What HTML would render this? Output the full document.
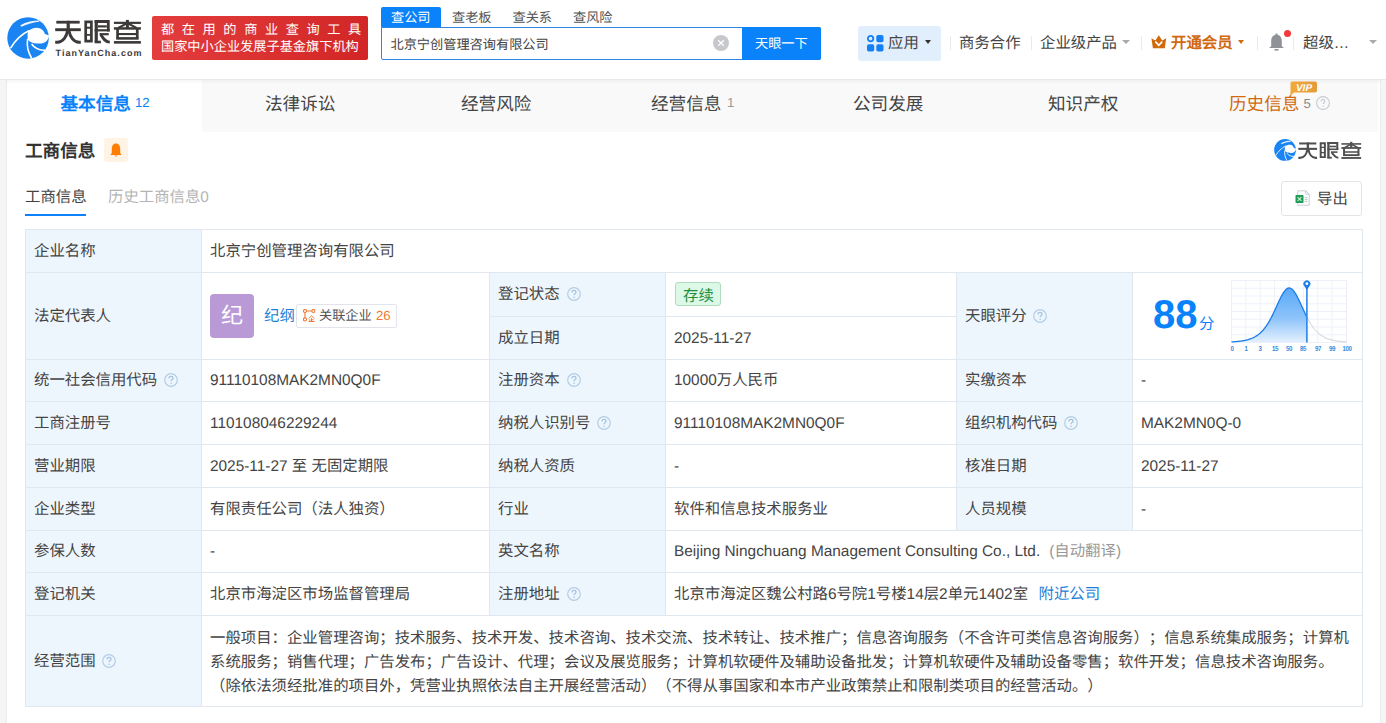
<!DOCTYPE html>
<html lang="zh-CN">
<head>
<meta charset="utf-8">
<style>
*{box-sizing:border-box;margin:0;padding:0}
html,body{width:1386px;height:723px;overflow:hidden}
body{background:#f5f5f5;font-family:"Liberation Sans",sans-serif;color:#333;position:relative;text-spacing-trim:space-all;text-rendering:geometricPrecision}
.a{position:absolute;white-space:nowrap}
.q{position:absolute;width:14px;height:14px}
</style>
</head>
<body>
<div class="a" style="left:0px;top:0px;width:1386px;height:79px;background:#fff"></div>
<div class="a" style="left:0px;top:79px;width:1386px;height:1px;background:#e9e9e9"></div>
<svg class="a" style="left:7px;top:17px" width="42" height="42" viewBox="2 2.5 42 42">
<circle cx="23.05" cy="23.45" r="20.75" fill="#1a85f2"/>
<path d="M23.6 16.2 C27 13.4 31.8 12.6 35.2 13.9 C37.6 14.9 39.3 17 39.9 19.6 L44.5 21.2 L44 22.2 C42.5 26.2 40.2 28.4 36.6 29 C32.2 29.2 28.2 28.9 25.6 27.5 C23.6 26.4 22.7 24.7 22.6 22.2 C22.5 19.8 22.8 17.6 23.6 16.2 Z" fill="#fff"/>
<path d="M15.8 11 C21 8 28 6.2 34.2 6.6 C28 7.5 21.5 9.5 16.5 11.8 Z" fill="#fff" stroke="#fff" stroke-width="0.8"/>
<path d="M5.6 33.6 C10 26 16.5 19.5 24.4 15.9" stroke="#fff" stroke-width="1.6" fill="none"/>
<path d="M22.7 24.2 C21.6 30.5 22.8 37.5 26.8 44" stroke="#fff" stroke-width="1.6" fill="none"/>
<path d="M26.6 29.6 C30 34.2 35 36.2 40.5 35.6" stroke="#fff" stroke-width="1.6" fill="none"/>
</svg>
<svg class="a" style="left:52px;top:16px" width="94" height="30" viewBox="0 0 94 30" preserveAspectRatio="none"><g fill="none" stroke="#3d3939" stroke-linecap="butt" stroke-linejoin="miter">
<path d="M4.3 6.2 H27.7" stroke-width="2.8"/>
<path d="M3.2 13.7 H28.8" stroke-width="2.9"/>
<path d="M16.2 4.8 V14" stroke-width="3.2"/>
<path d="M15.6 14.5 C14.6 20.5 11 26.2 5.5 26.2 H3.2" stroke-width="2.9"/>
<path d="M16.9 14.5 C17.9 20.5 21.5 26.2 27 26.2 H28.8" stroke-width="2.9"/>
<path d="M33.7 5.9 H39.4 V25.2 H33.7 Z" stroke-width="2.7"/>
<path d="M33.7 11.7 H39.4 M33.7 18.9 H39.4" stroke-width="1.9"/>
<path d="M44.25 4.1 V26" stroke-width="3.2"/>
<path d="M42.6 26 H48.9" stroke-width="2.6"/>
<path d="M42.6 5.5 H56.3 M56.3 4.1 V15.4" stroke-width="2.8"/>
<path d="M45.9 10.4 H54.8" stroke-width="2.2"/>
<path d="M42.6 14.3 H57.8" stroke-width="2.2"/>
<path d="M47.6 18.2 H56.7" stroke-width="2.2"/>
<path d="M48.8 18.8 C51.2 22.6 53.4 26.1 57.8 26.1" stroke-width="2.8"/>
<path d="M61.9 6.85 H88.9" stroke-width="2.2"/>
<path d="M75.4 3.9 V12" stroke-width="3"/>
<path d="M74.3 7.6 L66.3 12 M76.5 7.6 L84.5 12" stroke-width="2.2"/>
<path d="M61.9 12.45 H88.9" stroke-width="2.5"/>
<path d="M65.55 12 V22.4 M85.25 12 V22.4" stroke-width="2.7"/>
<path d="M65.55 18.05 H85.25" stroke-width="2.1"/>
<path d="M64.2 22.4 H86.6" stroke-width="2.6"/>
<path d="M61.9 26.35 H88.9" stroke-width="2.6"/>
</g></svg>
<div class="a" style="left:55.5px;top:46.5px;font-size:9.00px;line-height:12.00px;color:#3d3939;font-weight:bold;letter-spacing:1.05px">TianYanCha.com</div>
<div class="a" style="left:152px;top:16px;width:216px;height:44px;background:linear-gradient(100deg,#e43d3d,#d22626);border-radius:2px"></div>
<div class="a" style="left:161px;top:20.5px;font-size:13.20px;line-height:18.00px;color:#fff;letter-spacing:7.6px">都在用的商业查询工具</div>
<div class="a" style="left:161px;top:37.5px;font-size:13.20px;line-height:18.00px;color:#fff;letter-spacing:0px">国家中小企业发展子基金旗下机构</div>
<div class="a" style="left:381px;top:7px;width:60px;height:20px;background:#0a83fa;border-radius:2px 2px 0 0"></div>
<div class="a" style="left:391px;top:7.5px;font-size:13.20px;line-height:20.00px;color:#fff;">查公司</div>
<div class="a" style="left:452px;top:7.5px;font-size:13.20px;line-height:20.00px;color:#555;">查老板</div>
<div class="a" style="left:512.5px;top:7.5px;font-size:13.20px;line-height:20.00px;color:#555;">查关系</div>
<div class="a" style="left:573px;top:7.5px;font-size:13.20px;line-height:20.00px;color:#555;">查风险</div>
<div class="a" style="left:381px;top:27px;width:440px;height:33px;border:1px solid #2f86e0;border-radius:0 2px 2px 2px;background:#fff"></div>
<div class="a" style="left:390.5px;top:35px;font-size:13.20px;line-height:20.00px;color:#444;">北京宁创管理咨询有限公司</div>
<svg class="a" style="left:713px;top:35px" width="16" height="16"><circle cx="8" cy="8" r="8" fill="#c6c8cc"/><path d="M5.2 5.2L10.8 10.8M10.8 5.2L5.2 10.8" stroke="#fff" stroke-width="1.25"/></svg>
<div class="a" style="left:742px;top:27px;width:79px;height:33px;background:#0a83fa;border-radius:0 2px 2px 0"></div>
<div class="a" style="left:755px;top:34px;font-size:13.20px;line-height:20.00px;color:#fff;">天眼一下</div>
<div class="a" style="left:858px;top:26px;width:83px;height:35px;background:#e1eefc;border-radius:3px"></div>
<svg class="a" style="left:867px;top:35px" width="17" height="17" viewBox="0 0 17 17"><circle cx="3.6" cy="3.6" r="2.7" fill="none" stroke="#1480f4" stroke-width="1.8"/><rect x="9.3" y="0" width="7.2" height="7.2" rx="1.8" fill="#1480f4"/><rect x="0" y="9.3" width="7.2" height="7.2" rx="1.8" fill="#1480f4"/><rect x="9.3" y="9.3" width="7.2" height="7.2" rx="1.8" fill="#1480f4"/></svg>
<div class="a" style="left:888px;top:33.5px;font-size:15.40px;line-height:20.00px;color:#444;">应用</div>
<div class="a" style="left:924.5px;top:40px;width:0;height:0;border-left:3.5px solid transparent;border-right:3.5px solid transparent;border-top:4px solid #333"></div>
<div class="a" style="left:950px;top:36px;width:1px;height:14px;background:#e9eaec"></div>
<div class="a" style="left:1031px;top:36px;width:1px;height:14px;background:#e9eaec"></div>
<div class="a" style="left:1141px;top:36px;width:1px;height:14px;background:#e9eaec"></div>
<div class="a" style="left:1257px;top:36px;width:1px;height:14px;background:#e9eaec"></div>
<div class="a" style="left:1293px;top:36px;width:1px;height:14px;background:#e9eaec"></div>
<div class="a" style="left:959px;top:33.5px;font-size:15.40px;line-height:20.00px;color:#444;">商务合作</div>
<div class="a" style="left:1040px;top:33.5px;font-size:15.40px;line-height:20.00px;color:#444;">企业级产品</div>
<div class="a" style="left:1122px;top:40px;width:0;height:0;border-left:4.0px solid transparent;border-right:4.0px solid transparent;border-top:4px solid #aaa"></div>
<svg class="a" style="left:1151px;top:34.5px" width="16" height="14" viewBox="0 0 16 14"><path d="M0.4 3.2 L4.3 5.6 L7.8 0.2 L11.3 5.6 L15.2 3.2 L13.8 13.3 L1.9 13.3 Z" fill="#d26a0c"/><path d="M4.4 6.6 L7.8 10.4 L11.2 6.6" fill="none" stroke="#fff" stroke-width="1.6"/></svg>
<div class="a" style="left:1171px;top:33.5px;font-size:15.40px;line-height:20.00px;color:#d0690f;font-weight:bold">开通会员</div>
<div class="a" style="left:1237.5px;top:40px;width:0;height:0;border-left:3.5px solid transparent;border-right:3.5px solid transparent;border-top:4px solid #d0690f"></div>
<svg class="a" style="left:1268px;top:33px" width="17" height="18" viewBox="0 0 17 18"><rect x="7.5" y="0.5" width="2" height="2" fill="#8f9297"/><path d="M8.5 1.8 C4.8 1.8 3.2 4.8 3.2 8 L3.2 13.2 L1 15 L16 15 L13.8 13.2 L13.8 8 C13.8 4.8 12.2 1.8 8.5 1.8 Z" fill="#8f9297"/><rect x="6.5" y="16" width="4" height="1.6" fill="#8f9297"/></svg>
<div class="a" style="left:1284px;top:30px;width:7px;height:7px;background:#f23b3b;border-radius:50%"></div>
<div class="a" style="left:1303px;top:33.5px;font-size:15.40px;line-height:20.00px;color:#444;">超级…</div>
<div class="a" style="left:1369px;top:40px;width:0;height:0;border-left:4.0px solid transparent;border-right:4.0px solid transparent;border-top:4px solid #aaa"></div>
<div class="a" style="left:6px;top:80px;width:1375px;height:650px;background:#fff;border-left:1px solid #ececec;border-right:1px solid #ececec"></div>
<div class="a" style="left:7px;top:80px;width:1371px;height:52px;background:#f9f9f9"></div>
<div class="a" style="left:7px;top:80px;width:195px;height:52px;background:#fff"></div>
<div class="a" style="left:6px;top:80px;width:1375px;height:4px;background:linear-gradient(rgba(0,0,0,0.04),rgba(0,0,0,0))"></div>
<div class="a" style="left:60.5px;top:92px;font-size:17.60px;line-height:24.00px;color:#0a83fa;font-weight:bold">基本信息</div>
<div class="a" style="left:135px;top:95px;font-size:13.20px;line-height:16.00px;color:#0a83fa;">12</div>
<div class="a" style="left:265px;top:92px;font-size:17.60px;line-height:24.00px;color:#444;">法律诉讼</div>
<div class="a" style="left:461px;top:92px;font-size:17.60px;line-height:24.00px;color:#444;">经营风险</div>
<div class="a" style="left:651px;top:92px;font-size:17.60px;line-height:24.00px;color:#444;">经营信息</div>
<div class="a" style="left:853px;top:92px;font-size:17.60px;line-height:24.00px;color:#444;">公司发展</div>
<div class="a" style="left:1048px;top:92px;font-size:17.60px;line-height:24.00px;color:#444;">知识产权</div>
<div class="a" style="left:727px;top:95px;font-size:13.20px;line-height:16.00px;color:#999;">1</div>
<div class="a" style="left:1229px;top:92px;font-size:17.60px;line-height:24.00px;color:#d0690f;">历史信息</div>
<div class="a" style="left:1303.5px;top:95.5px;font-size:13.20px;line-height:16.00px;color:#888;">5</div>
<svg class="a" style="left:1316px;top:96px" width="14" height="14" viewBox="0 0 14 14"><circle cx="7" cy="7" r="6.4" fill="none" stroke="#c6ccd4" stroke-width="1.1"/><path d="M5.1 5.4 C5.1 4.2 6 3.5 7 3.5 C8.1 3.5 8.9 4.2 8.9 5.2 C8.9 6.4 7.2 6.6 7.2 8.1" fill="none" stroke="#bfc6cf" stroke-width="1.1"/><circle cx="7.2" cy="10.1" r="0.7" fill="#bfc6cf"/></svg>
<svg class="a" style="left:1289px;top:81px" width="29" height="16" viewBox="0 0 29 16"><defs><linearGradient id="vg" x1="0" x2="1"><stop offset="0" stop-color="#f2a93b"/><stop offset="1" stop-color="#e49a3a"/></linearGradient></defs><path d="M3 0.5 H26 Q28 0.5 28 2.5 V9.5 Q28 11.5 26 11.5 H5 L1 15 L1.5 11 V2.5 Q1.5 0.5 3 0.5 Z" fill="url(#vg)"/><text x="15" y="9.8" text-anchor="middle" font-family="Liberation Sans" font-weight="bold" font-style="italic" font-size="10" fill="#fff">VIP</text></svg>
<div class="a" style="left:25px;top:139px;font-size:17.60px;line-height:24.00px;color:#333;font-weight:bold">工商信息</div>
<div class="a" style="left:104px;top:138px;width:24px;height:24px;background:#fff3e6;border-radius:3px"></div>
<svg class="a" style="left:110px;top:143px" width="12" height="14" viewBox="0 0 12 14"><path d="M6 0.5 C3 0.5 1.8 3 1.8 6 L1.8 10 L0.3 12 L11.7 12 L10.2 10 L10.2 6 C10.2 3 9 0.5 6 0.5 Z" fill="#ff7d00"/><path d="M4.3 12.6 Q6 14.4 7.7 12.6 Z" fill="#ff7d00"/></svg>
<svg class="a" style="left:1274px;top:139px" width="22" height="22" viewBox="2 2.5 42 42">
<circle cx="23.05" cy="23.45" r="20.75" fill="#1a85f2"/>
<path d="M23.6 16.2 C27 13.4 31.8 12.6 35.2 13.9 C37.6 14.9 39.3 17 39.9 19.6 L44.5 21.2 L44 22.2 C42.5 26.2 40.2 28.4 36.6 29 C32.2 29.2 28.2 28.9 25.6 27.5 C23.6 26.4 22.7 24.7 22.6 22.2 C22.5 19.8 22.8 17.6 23.6 16.2 Z" fill="#fff"/>
<path d="M15.8 11 C21 8 28 6.2 34.2 6.6 C28 7.5 21.5 9.5 16.5 11.8 Z" fill="#fff" stroke="#fff" stroke-width="0.8"/>
<path d="M5.6 33.6 C10 26 16.5 19.5 24.4 15.9" stroke="#fff" stroke-width="1.6" fill="none"/>
<path d="M22.7 24.2 C21.6 30.5 22.8 37.5 26.8 44" stroke="#fff" stroke-width="1.6" fill="none"/>
<path d="M26.6 29.6 C30 34.2 35 36.2 40.5 35.6" stroke="#fff" stroke-width="1.6" fill="none"/>
</svg>
<svg class="a" style="left:1296.4px;top:139.2px" width="68.9" height="21.6" viewBox="0 0 94 30" preserveAspectRatio="none"><g fill="none" stroke="#4f4f4f" stroke-linecap="butt" stroke-linejoin="miter">
<path d="M4.3 6.2 H27.7" stroke-width="2.8"/>
<path d="M3.2 13.7 H28.8" stroke-width="2.9"/>
<path d="M16.2 4.8 V14" stroke-width="3.2"/>
<path d="M15.6 14.5 C14.6 20.5 11 26.2 5.5 26.2 H3.2" stroke-width="2.9"/>
<path d="M16.9 14.5 C17.9 20.5 21.5 26.2 27 26.2 H28.8" stroke-width="2.9"/>
<path d="M33.7 5.9 H39.4 V25.2 H33.7 Z" stroke-width="2.7"/>
<path d="M33.7 11.7 H39.4 M33.7 18.9 H39.4" stroke-width="1.9"/>
<path d="M44.25 4.1 V26" stroke-width="3.2"/>
<path d="M42.6 26 H48.9" stroke-width="2.6"/>
<path d="M42.6 5.5 H56.3 M56.3 4.1 V15.4" stroke-width="2.8"/>
<path d="M45.9 10.4 H54.8" stroke-width="2.2"/>
<path d="M42.6 14.3 H57.8" stroke-width="2.2"/>
<path d="M47.6 18.2 H56.7" stroke-width="2.2"/>
<path d="M48.8 18.8 C51.2 22.6 53.4 26.1 57.8 26.1" stroke-width="2.8"/>
<path d="M61.9 6.85 H88.9" stroke-width="2.2"/>
<path d="M75.4 3.9 V12" stroke-width="3"/>
<path d="M74.3 7.6 L66.3 12 M76.5 7.6 L84.5 12" stroke-width="2.2"/>
<path d="M61.9 12.45 H88.9" stroke-width="2.5"/>
<path d="M65.55 12 V22.4 M85.25 12 V22.4" stroke-width="2.7"/>
<path d="M65.55 18.05 H85.25" stroke-width="2.1"/>
<path d="M64.2 22.4 H86.6" stroke-width="2.6"/>
<path d="M61.9 26.35 H88.9" stroke-width="2.6"/>
</g></svg>
<div class="a" style="left:25px;top:187.5px;font-size:15.40px;line-height:20.00px;color:#444;">工商信息</div>
<div class="a" style="left:25px;top:214px;width:61px;height:2px;background:#0a83fa"></div>
<div class="a" style="left:108px;top:187.5px;font-size:15.40px;line-height:20.00px;color:#b4b4b4;">历史工商信息0</div>
<div class="a" style="left:1281px;top:181px;width:81px;height:35px;border:1px solid #e2e4e8;border-radius:3px;background:#fff"></div>
<svg class="a" style="left:1295px;top:190px" width="17" height="17" viewBox="0 0 17 17"><path d="M2.8 0.8 H10.8 L14.2 4.2 V15.2 H2.8 Z" fill="#fff" stroke="#c9cdd3" stroke-width="1"/><path d="M10.8 0.8 V4.2 H14.2" fill="none" stroke="#c9cdd3" stroke-width="1"/><rect x="0.5" y="5" width="8" height="8" rx="0.8" fill="#1f9d55"/><path d="M2.6 7.1 L6.4 10.9 M6.4 7.1 L2.6 10.9" stroke="#c8f5d8" stroke-width="1.1"/><path d="M9.8 7.6 H12.4 M9.8 9.5 H12.4 M9.8 11.4 H12.4" stroke="#b9bec5" stroke-width="0.9"/></svg>
<div class="a" style="left:1317px;top:190px;font-size:15.40px;line-height:20.00px;color:#444;">导出</div>
<div class="a" style="left:25px;top:229px;width:176px;height:477px;background:#eef6fd"></div>
<div class="a" style="left:489px;top:272px;width:176px;height:343px;background:#eef6fd"></div>
<div class="a" style="left:956px;top:272px;width:176px;height:258px;background:#eef6fd"></div>
<div class="a" style="left:25px;top:229px;width:1338px;height:1px;background:#e0e7ef"></div>
<div class="a" style="left:25px;top:272px;width:1338px;height:1px;background:#e0e7ef"></div>
<div class="a" style="left:25px;top:359px;width:1338px;height:1px;background:#e0e7ef"></div>
<div class="a" style="left:25px;top:401px;width:1338px;height:1px;background:#e0e7ef"></div>
<div class="a" style="left:25px;top:444px;width:1338px;height:1px;background:#e0e7ef"></div>
<div class="a" style="left:25px;top:487px;width:1338px;height:1px;background:#e0e7ef"></div>
<div class="a" style="left:25px;top:530px;width:1338px;height:1px;background:#e0e7ef"></div>
<div class="a" style="left:25px;top:572px;width:1338px;height:1px;background:#e0e7ef"></div>
<div class="a" style="left:25px;top:615px;width:1338px;height:1px;background:#e0e7ef"></div>
<div class="a" style="left:25px;top:706px;width:1338px;height:1px;background:#e0e7ef"></div>
<div class="a" style="left:489px;top:316px;width:468px;height:1px;background:#e0e7ef"></div>
<div class="a" style="left:25px;top:229px;width:1px;height:478px;background:#e0e7ef"></div>
<div class="a" style="left:1362px;top:229px;width:1px;height:478px;background:#e0e7ef"></div>
<div class="a" style="left:201px;top:229px;width:1px;height:478px;background:#e0e7ef"></div>
<div class="a" style="left:489px;top:272px;width:1px;height:344px;background:#e0e7ef"></div>
<div class="a" style="left:665px;top:272px;width:1px;height:344px;background:#e0e7ef"></div>
<div class="a" style="left:956px;top:272px;width:1px;height:259px;background:#e0e7ef"></div>
<div class="a" style="left:1132px;top:272px;width:1px;height:259px;background:#e0e7ef"></div>
<div class="a" style="left:34px;top:230px;height:43px;line-height:43px;font-size:15.4px;color:#444;">企业名称</div>
<div class="a" style="left:210px;top:230px;height:43px;line-height:43px;font-size:15.4px;color:#444;">北京宁创管理咨询有限公司</div>
<div class="a" style="left:34px;top:273px;height:87px;line-height:87px;font-size:15.4px;color:#444;">法定代表人</div>
<div class="a" style="left:210px;top:294px;width:44px;height:44px;background:#b99ad6;border-radius:4px"></div>
<div class="a" style="left:210px;top:294px;font-size:1.00px;line-height:1.40px;color:#333;"></div>
<div class="a" style="left:210px;top:294px;width:44px;height:44px;line-height:44px;text-align:center;font-size:22px;color:#fff">纪</div>
<div class="a" style="left:264px;top:273px;height:87px;line-height:87px;font-size:15.4px;color:#1f7fd8;">纪纲</div>
<div class="a" style="left:296px;top:304px;width:101px;height:24px;border:1px solid #e1e5eb;border-radius:2px;background:#fff"></div>
<svg class="a" style="left:303px;top:309px" width="13" height="13" viewBox="0 0 13 13"><circle cx="2" cy="2" r="1.55" fill="none" stroke="#ec7a35" stroke-width="1.1"/><circle cx="10.4" cy="2" r="1.55" fill="none" stroke="#ec7a35" stroke-width="1.1"/><circle cx="2" cy="10.4" r="1.55" fill="none" stroke="#ec7a35" stroke-width="1.1"/><path d="M3.55 2 H8.85 M2 3.55 V8.85" stroke="#ec7a35" stroke-width="1.1"/><path d="M5.6 9.6 L8.5 6.8 L11.4 9.6 M8.5 9.2 V12.4 M6.8 10.4 V12.4 M8.5 10.8 H10.6 M5.8 12.5 H11.6" fill="none" stroke="#ec7a35" stroke-width="1"/></svg>
<div class="a" style="left:319px;top:305px;font-size:13.20px;line-height:22.00px;color:#555;">关联企业</div>
<div class="a" style="left:376px;top:305px;font-size:13.20px;line-height:22.00px;color:#ee7a2c;">26</div>
<div class="a" style="left:498px;top:273px;height:44px;line-height:44px;font-size:15.4px;color:#444;">登记状态</div>
<svg class="q" style="left:567px;top:287px" width="14" height="14" viewBox="0 0 14 14"><circle cx="7" cy="7" r="6.3" fill="none" stroke="#b4cde5" stroke-width="1.2"/><path d="M5 5.4 C5 4.1 5.9 3.4 7 3.4 C8.1 3.4 9 4.1 9 5.2 C9 6.5 7.1 6.6 7.1 8.2" fill="none" stroke="#a6c4e2" stroke-width="1.3"/><circle cx="7.1" cy="10.2" r="0.8" fill="#a6c4e2"/></svg>
<div class="a" style="left:675px;top:282px;width:46px;height:24px;background:#dcf8e6;border:1px solid #aedcbc;border-radius:3px"></div>
<div class="a" style="left:683px;top:285.5px;font-size:15.40px;line-height:22.00px;color:#1f8f3f;">存续</div>
<div class="a" style="left:498px;top:317px;height:43px;line-height:43px;font-size:15.4px;color:#444;">成立日期</div>
<div class="a" style="left:674px;top:317px;height:43px;line-height:43px;font-size:15.4px;color:#444;">2025-11-27</div>
<div class="a" style="left:965px;top:273px;height:87px;line-height:87px;font-size:15.4px;color:#444;">天眼评分</div>
<svg class="q" style="left:1033px;top:309px" width="14" height="14" viewBox="0 0 14 14"><circle cx="7" cy="7" r="6.3" fill="none" stroke="#b4cde5" stroke-width="1.2"/><path d="M5 5.4 C5 4.1 5.9 3.4 7 3.4 C8.1 3.4 9 4.1 9 5.2 C9 6.5 7.1 6.6 7.1 8.2" fill="none" stroke="#a6c4e2" stroke-width="1.3"/><circle cx="7.1" cy="10.2" r="0.8" fill="#a6c4e2"/></svg>
<div class="a" style="left:1153px;top:291.5px;font-size:40.00px;line-height:46.00px;color:#0a83fa;font-weight:bold">88</div>
<div class="a" style="left:1199px;top:315px;font-size:15.40px;line-height:20.00px;color:#0a83fa;">分</div>
<svg class="a" style="left:1231px;top:280px;overflow:visible" width="117" height="64" viewBox="0 0 117 64">
<defs><linearGradient id="cg" x1="0" y1="0" x2="0" y2="1"><stop offset="0" stop-color="#5aa9f8"/><stop offset="0.55" stop-color="#8cc3fa"/><stop offset="1" stop-color="#e4f0fd"/></linearGradient></defs>
<path d="M0.5 0.5 V62.5" stroke="#edf1f7" stroke-width="1"/><path d="M14.9 0.5 V62.5" stroke="#edf1f7" stroke-width="1"/><path d="M29.2 0.5 V62.5" stroke="#edf1f7" stroke-width="1"/><path d="M43.6 0.5 V62.5" stroke="#edf1f7" stroke-width="1"/><path d="M58.0 0.5 V62.5" stroke="#edf1f7" stroke-width="1"/><path d="M72.4 0.5 V62.5" stroke="#edf1f7" stroke-width="1"/><path d="M86.8 0.5 V62.5" stroke="#edf1f7" stroke-width="1"/><path d="M101.1 0.5 V62.5" stroke="#edf1f7" stroke-width="1"/><path d="M115.5 0.5 V62.5" stroke="#edf1f7" stroke-width="1"/><path d="M0.5 0.5 H115.5" stroke="#edf1f7" stroke-width="1"/><path d="M0.5 8.2 H115.5" stroke="#edf1f7" stroke-width="1"/><path d="M0.5 16.0 H115.5" stroke="#edf1f7" stroke-width="1"/><path d="M0.5 23.8 H115.5" stroke="#edf1f7" stroke-width="1"/><path d="M0.5 31.5 H115.5" stroke="#edf1f7" stroke-width="1"/><path d="M0.5 39.2 H115.5" stroke="#edf1f7" stroke-width="1"/><path d="M0.5 47.0 H115.5" stroke="#edf1f7" stroke-width="1"/><path d="M0.5 54.8 H115.5" stroke="#edf1f7" stroke-width="1"/><path d="M0.5 62.5 H115.5" stroke="#edf1f7" stroke-width="1"/>
<polygon points="0.5,62.4 0.5,61.90 1.0,61.87 1.5,61.85 2.0,61.82 2.5,61.79 3.0,61.75 3.5,61.72 4.0,61.68 4.5,61.64 5.0,61.60 5.5,61.56 6.0,61.51 6.5,61.47 7.0,61.42 7.5,61.36 8.0,61.31 8.5,61.25 9.0,61.19 9.5,61.12 10.0,61.05 10.5,60.98 11.0,60.91 11.5,60.83 12.0,60.74 12.5,60.66 13.0,60.56 13.5,60.47 14.0,60.36 14.5,60.26 15.0,60.14 15.5,60.02 16.0,59.90 16.5,59.77 17.0,59.63 17.5,59.48 18.0,59.33 18.5,59.17 19.0,59.00 19.5,58.82 20.0,58.63 20.5,58.44 21.0,58.23 21.5,58.02 22.0,57.79 22.5,57.55 23.0,57.30 23.5,57.04 24.0,56.77 24.5,56.48 25.0,56.18 25.5,55.86 26.0,55.53 26.5,55.19 27.0,54.82 27.5,54.45 28.0,54.05 28.5,53.64 29.0,53.21 29.5,52.76 30.0,52.28 30.5,51.79 31.0,51.28 31.5,50.75 32.0,50.20 32.5,49.62 33.0,49.02 33.5,48.40 34.0,47.75 34.5,47.08 35.0,46.38 35.5,45.66 36.0,44.92 36.5,44.14 37.0,43.35 37.5,42.53 38.0,41.68 38.5,40.81 39.0,39.92 39.5,39.00 40.0,38.06 40.5,37.10 41.0,36.11 41.5,35.11 42.0,34.08 42.5,33.04 43.0,31.99 43.5,30.92 44.0,29.84 44.5,28.75 45.0,27.65 45.5,26.55 46.0,25.45 46.5,24.35 47.0,23.25 47.5,22.17 48.0,21.09 48.5,20.04 49.0,19.00 49.5,17.98 50.0,17.00 50.5,16.04 51.0,15.12 51.5,14.24 52.0,13.40 52.5,12.62 53.0,11.88 53.5,11.20 54.0,10.57 54.5,10.01 55.0,9.51 55.5,9.08 56.0,8.72 56.5,8.43 57.0,8.22 57.5,8.07 58.0,8.01 58.5,8.01 59.0,8.10 59.5,8.25 60.0,8.49 60.5,8.79 61.0,9.16 61.5,9.61 62.0,10.12 62.5,10.69 63.0,11.33 63.5,12.02 64.0,12.77 64.5,13.57 65.0,14.41 65.5,15.30 66.0,16.23 66.5,17.19 67.0,18.18 67.5,19.20 68.0,20.25 68.5,21.31 69.0,22.38 69.5,23.47 70.0,24.57 70.5,25.67 71.0,26.77 71.5,27.87 72.0,28.97 72.5,30.05 73.0,31.13 73.5,32.20 74.0,33.25 74.5,34.29 75.0,35.31 75.5,36.31 75.9,62.4" fill="url(#cg)"/>
<polyline points="76.0,37.29 76.5,38.25 77.0,39.19 77.5,40.10 78.0,40.99 78.5,41.85 79.0,42.69 79.5,43.51 80.0,44.30 80.5,45.07 81.0,45.81 81.5,46.52 82.0,47.21 82.5,47.88 83.0,48.52 83.5,49.14 84.0,49.74 84.5,50.31 85.0,50.86 85.5,51.39 86.0,51.89 86.5,52.38 87.0,52.85 87.5,53.29 88.0,53.72 88.5,54.13 89.0,54.52 89.5,54.90 90.0,55.26 90.5,55.60 91.0,55.93 91.5,56.24 92.0,56.54 92.5,56.82 93.0,57.09 93.5,57.35 94.0,57.60 94.5,57.84 95.0,58.06 95.5,58.27 96.0,58.48 96.5,58.67 97.0,58.86 97.5,59.03 98.0,59.20 98.5,59.36 99.0,59.51 99.5,59.66 100.0,59.79 100.5,59.92 101.0,60.05 101.5,60.17 102.0,60.28 102.5,60.38 103.0,60.49 103.5,60.58 104.0,60.67 104.5,60.76 105.0,60.84 105.5,60.92 106.0,61.00 106.5,61.07 107.0,61.14 107.5,61.20 108.0,61.26 108.5,61.32 109.0,61.37 109.5,61.43 110.0,61.48 110.5,61.52 111.0,61.57 111.5,61.61 112.0,61.65 112.5,61.69 113.0,61.72 113.5,61.76 114.0,61.79 114.5,61.82 115.0,61.85 115.5,61.88" fill="none" stroke="#c6ccd5" stroke-width="1"/>
<polyline points="0.5,61.90 1.0,61.87 1.5,61.85 2.0,61.82 2.5,61.79 3.0,61.75 3.5,61.72 4.0,61.68 4.5,61.64 5.0,61.60 5.5,61.56 6.0,61.51 6.5,61.47 7.0,61.42 7.5,61.36 8.0,61.31 8.5,61.25 9.0,61.19 9.5,61.12 10.0,61.05 10.5,60.98 11.0,60.91 11.5,60.83 12.0,60.74 12.5,60.66 13.0,60.56 13.5,60.47 14.0,60.36 14.5,60.26 15.0,60.14 15.5,60.02 16.0,59.90 16.5,59.77 17.0,59.63 17.5,59.48 18.0,59.33 18.5,59.17 19.0,59.00 19.5,58.82 20.0,58.63 20.5,58.44 21.0,58.23 21.5,58.02 22.0,57.79 22.5,57.55 23.0,57.30 23.5,57.04 24.0,56.77 24.5,56.48 25.0,56.18 25.5,55.86 26.0,55.53 26.5,55.19 27.0,54.82 27.5,54.45 28.0,54.05 28.5,53.64 29.0,53.21 29.5,52.76 30.0,52.28 30.5,51.79 31.0,51.28 31.5,50.75 32.0,50.20 32.5,49.62 33.0,49.02 33.5,48.40 34.0,47.75 34.5,47.08 35.0,46.38 35.5,45.66 36.0,44.92 36.5,44.14 37.0,43.35 37.5,42.53 38.0,41.68 38.5,40.81 39.0,39.92 39.5,39.00 40.0,38.06 40.5,37.10 41.0,36.11 41.5,35.11 42.0,34.08 42.5,33.04 43.0,31.99 43.5,30.92 44.0,29.84 44.5,28.75 45.0,27.65 45.5,26.55 46.0,25.45 46.5,24.35 47.0,23.25 47.5,22.17 48.0,21.09 48.5,20.04 49.0,19.00 49.5,17.98 50.0,17.00 50.5,16.04 51.0,15.12 51.5,14.24 52.0,13.40 52.5,12.62 53.0,11.88 53.5,11.20 54.0,10.57 54.5,10.01 55.0,9.51 55.5,9.08 56.0,8.72 56.5,8.43 57.0,8.22 57.5,8.07 58.0,8.01 58.5,8.01 59.0,8.10 59.5,8.25 60.0,8.49 60.5,8.79 61.0,9.16 61.5,9.61 62.0,10.12 62.5,10.69 63.0,11.33 63.5,12.02 64.0,12.77 64.5,13.57 65.0,14.41 65.5,15.30 66.0,16.23 66.5,17.19 67.0,18.18 67.5,19.20 68.0,20.25 68.5,21.31 69.0,22.38 69.5,23.47 70.0,24.57 70.5,25.67 71.0,26.77 71.5,27.87 72.0,28.97 72.5,30.05 73.0,31.13 73.5,32.20 74.0,33.25 74.5,34.29 75.0,35.31 75.5,36.31" fill="none" stroke="#1a7ee8" stroke-width="1.3"/>
<path d="M75.9 62.5 V8" stroke="#1a7ee8" stroke-width="1.5"/>
<path d="M75.9 10 L72.9 5.6 A3.5 3.5 0 1 1 78.9 5.6 Z" fill="#1a7ee8"/>
<circle cx="75.9" cy="3.7" r="1.4" fill="#fff"/>
</svg>
<div class="a" style="left:1221.5px;top:343.5px;width:20px;text-align:center;font-size:7.2px;line-height:9px;color:#3a8ae0;letter-spacing:-0.4px;font-weight:bold;transform:scaleX(0.85)">0</div>
<div class="a" style="left:1235.9px;top:343.5px;width:20px;text-align:center;font-size:7.2px;line-height:9px;color:#3a8ae0;letter-spacing:-0.4px;font-weight:bold;transform:scaleX(0.85)">1</div>
<div class="a" style="left:1250.2px;top:343.5px;width:20px;text-align:center;font-size:7.2px;line-height:9px;color:#3a8ae0;letter-spacing:-0.4px;font-weight:bold;transform:scaleX(0.85)">3</div>
<div class="a" style="left:1264.6px;top:343.5px;width:20px;text-align:center;font-size:7.2px;line-height:9px;color:#3a8ae0;letter-spacing:-0.4px;font-weight:bold;transform:scaleX(0.85)">15</div>
<div class="a" style="left:1279.0px;top:343.5px;width:20px;text-align:center;font-size:7.2px;line-height:9px;color:#3a8ae0;letter-spacing:-0.4px;font-weight:bold;transform:scaleX(0.85)">50</div>
<div class="a" style="left:1293.4px;top:343.5px;width:20px;text-align:center;font-size:7.2px;line-height:9px;color:#3a8ae0;letter-spacing:-0.4px;font-weight:bold;transform:scaleX(0.85)">85</div>
<div class="a" style="left:1307.8px;top:343.5px;width:20px;text-align:center;font-size:7.2px;line-height:9px;color:#3a8ae0;letter-spacing:-0.4px;font-weight:bold;transform:scaleX(0.85)">97</div>
<div class="a" style="left:1322.1px;top:343.5px;width:20px;text-align:center;font-size:7.2px;line-height:9px;color:#3a8ae0;letter-spacing:-0.4px;font-weight:bold;transform:scaleX(0.85)">99</div>
<div class="a" style="left:1336.5px;top:343.5px;width:20px;text-align:center;font-size:7.2px;line-height:9px;color:#3a8ae0;letter-spacing:-0.4px;font-weight:bold;transform:scaleX(0.85)">100</div>
<div class="a" style="left:34px;top:360px;height:42px;line-height:42px;font-size:15.4px;color:#444;">统一社会信用代码</div>
<svg class="q" style="left:164px;top:373px" width="14" height="14" viewBox="0 0 14 14"><circle cx="7" cy="7" r="6.3" fill="none" stroke="#b4cde5" stroke-width="1.2"/><path d="M5 5.4 C5 4.1 5.9 3.4 7 3.4 C8.1 3.4 9 4.1 9 5.2 C9 6.5 7.1 6.6 7.1 8.2" fill="none" stroke="#a6c4e2" stroke-width="1.3"/><circle cx="7.1" cy="10.2" r="0.8" fill="#a6c4e2"/></svg>
<div class="a" style="left:210px;top:360px;height:42px;line-height:42px;font-size:15.4px;color:#444;">91110108MAK2MN0Q0F</div>
<div class="a" style="left:498px;top:360px;height:42px;line-height:42px;font-size:15.4px;color:#444;">注册资本</div>
<svg class="q" style="left:567px;top:373px" width="14" height="14" viewBox="0 0 14 14"><circle cx="7" cy="7" r="6.3" fill="none" stroke="#b4cde5" stroke-width="1.2"/><path d="M5 5.4 C5 4.1 5.9 3.4 7 3.4 C8.1 3.4 9 4.1 9 5.2 C9 6.5 7.1 6.6 7.1 8.2" fill="none" stroke="#a6c4e2" stroke-width="1.3"/><circle cx="7.1" cy="10.2" r="0.8" fill="#a6c4e2"/></svg>
<div class="a" style="left:674px;top:360px;height:42px;line-height:42px;font-size:15.4px;color:#444;">10000万人民币</div>
<div class="a" style="left:965px;top:360px;height:42px;line-height:42px;font-size:15.4px;color:#444;">实缴资本</div>
<div class="a" style="left:1141px;top:360px;height:42px;line-height:42px;font-size:15.4px;color:#444;">-</div>
<div class="a" style="left:34px;top:402px;height:43px;line-height:43px;font-size:15.4px;color:#444;">工商注册号</div>
<div class="a" style="left:210px;top:402px;height:43px;line-height:43px;font-size:15.4px;color:#444;">110108046229244</div>
<div class="a" style="left:498px;top:402px;height:43px;line-height:43px;font-size:15.4px;color:#444;">纳税人识别号</div>
<svg class="q" style="left:597px;top:416px" width="14" height="14" viewBox="0 0 14 14"><circle cx="7" cy="7" r="6.3" fill="none" stroke="#b4cde5" stroke-width="1.2"/><path d="M5 5.4 C5 4.1 5.9 3.4 7 3.4 C8.1 3.4 9 4.1 9 5.2 C9 6.5 7.1 6.6 7.1 8.2" fill="none" stroke="#a6c4e2" stroke-width="1.3"/><circle cx="7.1" cy="10.2" r="0.8" fill="#a6c4e2"/></svg>
<div class="a" style="left:674px;top:402px;height:43px;line-height:43px;font-size:15.4px;color:#444;">91110108MAK2MN0Q0F</div>
<div class="a" style="left:965px;top:402px;height:43px;line-height:43px;font-size:15.4px;color:#444;">组织机构代码</div>
<svg class="q" style="left:1064px;top:416px" width="14" height="14" viewBox="0 0 14 14"><circle cx="7" cy="7" r="6.3" fill="none" stroke="#b4cde5" stroke-width="1.2"/><path d="M5 5.4 C5 4.1 5.9 3.4 7 3.4 C8.1 3.4 9 4.1 9 5.2 C9 6.5 7.1 6.6 7.1 8.2" fill="none" stroke="#a6c4e2" stroke-width="1.3"/><circle cx="7.1" cy="10.2" r="0.8" fill="#a6c4e2"/></svg>
<div class="a" style="left:1141px;top:402px;height:43px;line-height:43px;font-size:15.4px;color:#444;">MAK2MN0Q-0</div>
<div class="a" style="left:34px;top:445px;height:43px;line-height:43px;font-size:15.4px;color:#444;">营业期限</div>
<div class="a" style="left:210px;top:445px;height:43px;line-height:43px;font-size:15.4px;color:#444;">2025-11-27 至 无固定期限</div>
<div class="a" style="left:498px;top:445px;height:43px;line-height:43px;font-size:15.4px;color:#444;">纳税人资质</div>
<div class="a" style="left:674px;top:445px;height:43px;line-height:43px;font-size:15.4px;color:#444;">-</div>
<div class="a" style="left:965px;top:445px;height:43px;line-height:43px;font-size:15.4px;color:#444;">核准日期</div>
<div class="a" style="left:1141px;top:445px;height:43px;line-height:43px;font-size:15.4px;color:#444;">2025-11-27</div>
<div class="a" style="left:34px;top:488px;height:43px;line-height:43px;font-size:15.4px;color:#444;">企业类型</div>
<div class="a" style="left:210px;top:488px;height:43px;line-height:43px;font-size:15.4px;color:#444;">有限责任公司（法人独资）</div>
<div class="a" style="left:498px;top:488px;height:43px;line-height:43px;font-size:15.4px;color:#444;">行业</div>
<div class="a" style="left:674px;top:488px;height:43px;line-height:43px;font-size:15.4px;color:#444;">软件和信息技术服务业</div>
<div class="a" style="left:965px;top:488px;height:43px;line-height:43px;font-size:15.4px;color:#444;">人员规模</div>
<div class="a" style="left:1141px;top:488px;height:43px;line-height:43px;font-size:15.4px;color:#444;">-</div>
<div class="a" style="left:34px;top:531px;height:42px;line-height:42px;font-size:15.4px;color:#444;">参保人数</div>
<div class="a" style="left:210px;top:531px;height:42px;line-height:42px;font-size:15.4px;color:#444;">-</div>
<div class="a" style="left:498px;top:531px;height:42px;line-height:42px;font-size:15.4px;color:#444;">英文名称</div>
<div class="a" style="left:674px;top:531px;height:42px;line-height:42px;font-size:15.4px;color:#444;">Beijing Ningchuang Management Consulting Co., Ltd.<span style="color:#999;margin-left:9px">(自动翻译)</span></div>
<div class="a" style="left:34px;top:573px;height:43px;line-height:43px;font-size:15.4px;color:#444;">登记机关</div>
<div class="a" style="left:210px;top:573px;height:43px;line-height:43px;font-size:15.4px;color:#444;">北京市海淀区市场监督管理局</div>
<div class="a" style="left:498px;top:573px;height:43px;line-height:43px;font-size:15.4px;color:#444;">注册地址</div>
<svg class="q" style="left:567px;top:587px" width="14" height="14" viewBox="0 0 14 14"><circle cx="7" cy="7" r="6.3" fill="none" stroke="#b4cde5" stroke-width="1.2"/><path d="M5 5.4 C5 4.1 5.9 3.4 7 3.4 C8.1 3.4 9 4.1 9 5.2 C9 6.5 7.1 6.6 7.1 8.2" fill="none" stroke="#a6c4e2" stroke-width="1.3"/><circle cx="7.1" cy="10.2" r="0.8" fill="#a6c4e2"/></svg>
<div class="a" style="left:674px;top:573px;height:43px;line-height:43px;font-size:15.4px;color:#444;">北京市海淀区魏公村路6号院1号楼14层2单元1402室<span style="color:#1f7fd8;margin-left:10.5px">附近公司</span></div>
<div class="a" style="left:34px;top:616px;height:91px;line-height:91px;font-size:15.4px;color:#444;">经营范围</div>
<svg class="q" style="left:102px;top:654px" width="14" height="14" viewBox="0 0 14 14"><circle cx="7" cy="7" r="6.3" fill="none" stroke="#b4cde5" stroke-width="1.2"/><path d="M5 5.4 C5 4.1 5.9 3.4 7 3.4 C8.1 3.4 9 4.1 9 5.2 C9 6.5 7.1 6.6 7.1 8.2" fill="none" stroke="#a6c4e2" stroke-width="1.3"/><circle cx="7.1" cy="10.2" r="0.8" fill="#a6c4e2"/></svg>
<div class="a" style="left:210px;top:627px;height:24px;line-height:24px;font-size:15.4px;color:#444">一般项目：企业管理咨询；技术服务、技术开发、技术咨询、技术交流、技术转让、技术推广；信息咨询服务（不含许可类信息咨询服务）；信息系统集成服务；计算机</div>
<div class="a" style="left:210px;top:651px;height:24px;line-height:24px;font-size:15.4px;color:#444">系统服务；销售代理；广告发布；广告设计、代理；会议及展览服务；计算机软硬件及辅助设备批发；计算机软硬件及辅助设备零售；软件开发；信息技术咨询服务。</div>
<div class="a" style="left:210px;top:675px;height:24px;line-height:24px;font-size:15.4px;color:#444">（除依法须经批准的项目外，凭营业执照依法自主开展经营活动）（不得从事国家和本市产业政策禁止和限制类项目的经营活动。）</div>
</body>
</html>
